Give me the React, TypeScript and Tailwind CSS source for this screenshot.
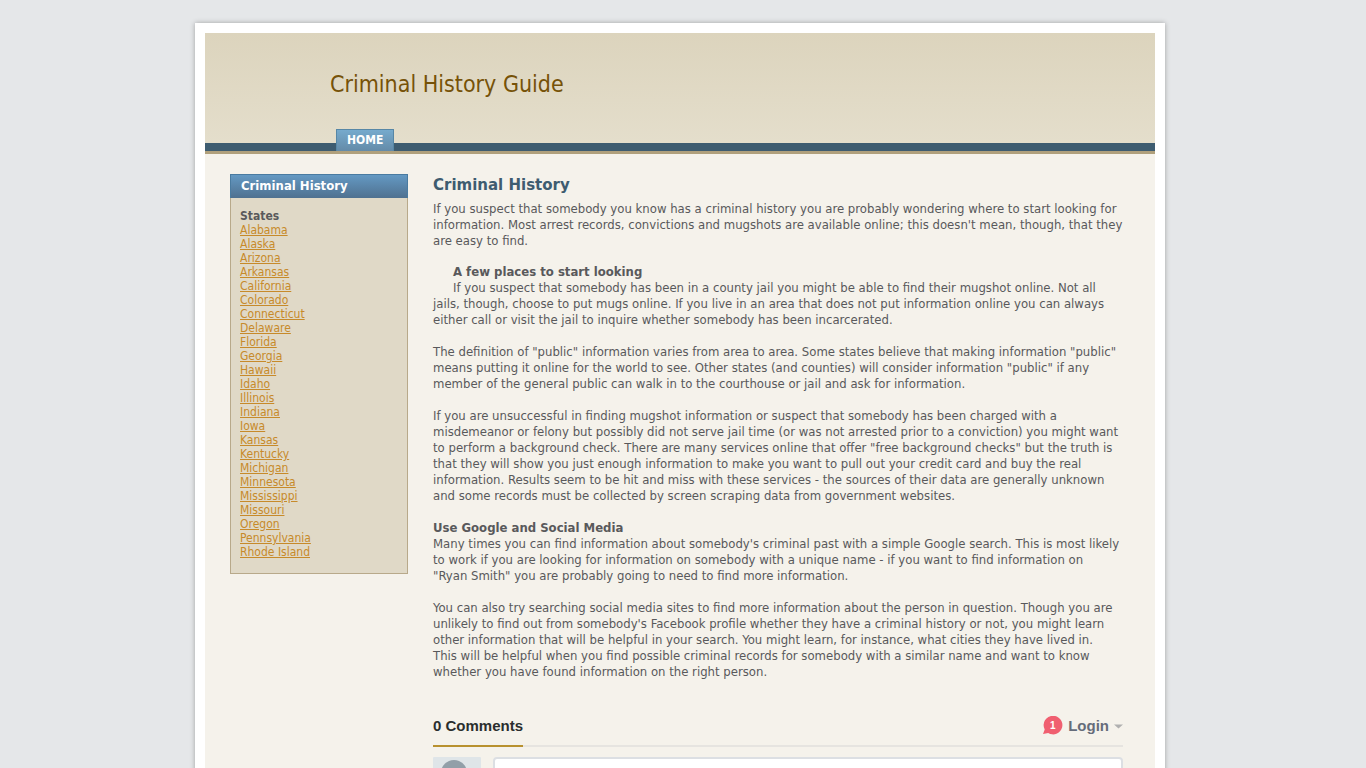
import React from 'react';

const states = [
  'Alabama', 'Alaska', 'Arizona', 'Arkansas', 'California', 'Colorado',
  'Connecticut', 'Delaware', 'Florida', 'Georgia', 'Hawaii', 'Idaho',
  'Illinois', 'Indiana', 'Iowa', 'Kansas', 'Kentucky', 'Michigan',
  'Minnesota', 'Mississippi', 'Missouri', 'Oregon', 'Pennsylvania', 'Rhode Island',
];

function Header() {
  return (
    <header className="bg-linear-to-b from-[#dcd4bd] to-[#e5dfcd]">
      <div className="pl-[125px] pt-8 h-24">
        <h1 className="text-[23px] leading-[38px] text-[#765208]">Criminal History Guide</h1>
      </div>
      <nav className="flex pl-[131px] bg-linear-to-b from-transparent from-[14px] to-[#3e5c70] to-[14px] border-b-3 border-[#b0a07c]">
        <a href="#" className="h-[22px] px-[10px] border border-b-0 border-[#5787a6] bg-linear-to-b from-[#76aacd] to-[#648ba8] text-xs leading-5 font-bold text-white">
          HOME
        </a>
      </nav>
    </header>
  );
}

function Sidebar() {
  return (
    <aside className="w-[178px] shrink-0 self-start">
      <h2 className="h-6 pl-[10px] border border-b-0 border-[#4a7ba0] bg-linear-to-b from-[#6499c3] to-[#4f7190] text-[13px] leading-[22px] font-bold text-white">
        Criminal History
      </h2>
      <div className="px-[9px] pt-[11px] pb-[14px] border border-t-0 border-[#b8a98a] bg-[#e0d9c7] text-xs leading-[14px]">
        <strong>States</strong>
        <ul>
          {states.map((s) => (
            <li key={s}>
              <a href="#" className="text-[#c78a2a] underline">{s}</a>
            </li>
          ))}
        </ul>
      </div>
    </aside>
  );
}

function Comments() {
  return (
    <section className="mt-9 font-['Liberation_Sans',sans-serif]">
      <div className="flex justify-between border-b-2 border-[#e6e4e0] text-[15px] leading-5 font-bold">
        <h3 className="-mb-[2px] pb-[9px] border-b-2 border-[#b8912f] text-[#2a2e2e]">0 Comments</h3>
        <button type="button" className="flex items-center self-start gap-[5px] text-[#656c7a]">
          <svg width="20" height="20" viewBox="0 0 20 20">
            <path d="M10-.2a9.300 9.300 0 1 1-4.800 17.200L0 18l1.700-4.500A9.300 9.300 0 0 1 10-.2z" fill="#f05f70" />
            <text x="9.800" y="12.800" textAnchor="middle" fontSize="10" fontWeight="700" fill="#fff">1</text>
          </svg>
          Login
          <svg width="9" height="5" viewBox="0 0 9 5">
            <path d="M0 .5h9L4.500 4.500z" fill="#b0b0b0" />
          </svg>
        </button>
      </div>
      <div className="flex gap-3 pt-[10px]">
        <svg className="shrink-0" width="48" height="48" viewBox="0 0 48 48">
          <rect width="48" height="48" rx="1" fill="#dfe5e8" />
          <circle cx="21" cy="16" r="13" fill="#929fa8" />
          <path d="M4 48c0-12 8-17 17-17s17 5 17 17z" fill="#929fa8" />
        </svg>
        <textarea aria-label="Start the discussion" className="grow h-[72px] resize-none border-2 border-[#dcdfe3] rounded bg-white" />
      </div>
    </section>
  );
}

function Article() {
  return (
    <main className="grow min-w-0 text-[13px] leading-4">
      <h2 className="mb-1 font-['DejaVu_Sans',sans-serif] text-[15px] leading-[23px] font-bold text-[#3e5c70]">Criminal History</h2>
      <p className="mb-[15px]">
        If you suspect that somebody you know has a criminal history you are probably wondering where to start looking for information. Most arrest records, convictions and mugshots are available online; this doesn't mean, though, that they are easy to find.
      </p>
      <h3 className="pl-5 font-bold">A few places to start looking</h3>
      <p className="mb-4 indent-5">
        If you suspect that somebody has been in a county jail you might be able to find their mugshot online. Not all jails, though, choose to put mugs online. If you live in an area that does not put information online you can always either call or visit the jail to inquire whether somebody has been incarcerated.
      </p>
      <p className="mb-4">
        The definition of "public" information varies from area to area. Some states believe that making information "public" means putting it online for the world to see. Other states (and counties) will consider information "public" if any member of the general public can walk in to the courthouse or jail and ask for information.
      </p>
      <p className="mb-4">
        If you are unsuccessful in finding mugshot information or suspect that somebody has been charged with a misdemeanor or felony but possibly did not serve jail time (or was not arrested prior to a conviction) you might want to perform a background check. There are many services online that offer "free background checks" but the truth is that they will show you just enough information to make you want to pull out your credit card and buy the real information. Results seem to be hit and miss with these services - the sources of their data are generally unknown and some records must be collected by screen scraping data from government websites.
      </p>
      <h3 className="font-bold">Use Google and Social Media</h3>
      <p className="mb-4">
        Many times you can find information about somebody's criminal past with a simple Google search. This is most likely to work if you are looking for information on somebody with a unique name - if you want to find information on <span className="whitespace-nowrap">"Ryan Smith"</span> you are probably going to need to find more information.
      </p>
      <p className="mb-4">
        You can also try searching social media sites to find more information about the person in question. Though you are unlikely to find out from somebody's Facebook profile whether they have a criminal history or not, you might learn other information that will be helpful in your search. You might learn, for instance, what cities they have lived in.
        <br />
        This will be helpful when you find possible criminal records for somebody with a similar name and want to know whether you have found information on the right person.
      </p>
      <Comments />
    </main>
  );
}

export default function App() {
  return (
    <div className="min-h-screen pt-[23px] pr-[6px] bg-[#e5e7e9] font-['DejaVu_Sans_Condensed',sans-serif] text-[#59595b]">
      <div className="mx-auto max-w-[970px] p-[10px] bg-white shadow-[0_0_5px_rgba(0,0,0,0.3)]">
        <Header />
        <div className="flex gap-[25px] pl-[25px] pr-8 pt-5 pb-8 bg-[#f5f2eb]">
          <Sidebar />
          <Article />
        </div>
      </div>
    </div>
  );
}
